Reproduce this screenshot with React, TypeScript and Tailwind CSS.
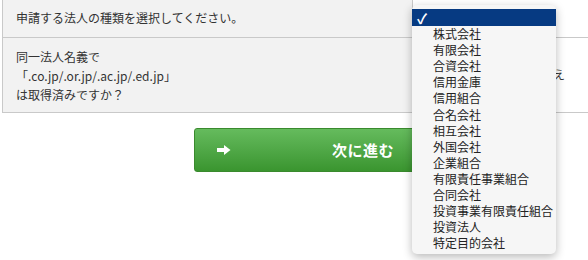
const corpTypes = [
  "株式会社",
  "有限会社",
  "合資会社",
  "信用金庫",
  "信用組合",
  "合名会社",
  "相互会社",
  "外国会社",
  "企業組合",
  "有限責任事業組合",
  "合同会社",
  "投資事業有限責任組合",
  "投資法人",
  "特定目的会社",
];

function ArrowIcon() {
  return (
    <svg width="14" height="10" viewBox="0 0 14 10" className="block">
      <rect x="0" y="3" width="8" height="4" fill="#fff" />
      <path d="M7 0 L13.5 5 L7 10 Z" fill="#fff" />
    </svg>
  );
}

export default function App() {
  return (
    <div
      className="relative h-[260px] w-[588px] overflow-hidden bg-white text-[12px] text-[#333]"
      style={{ fontFamily: '"Noto Sans CJK JP", "Noto Sans", sans-serif' }}
    >
      <div className="ml-[2px] border-b border-[#c9c9c9]">
        <div className="flex h-[38px] border-b border-[#c9c9c9]">
          <div className="flex w-[411px] items-center border-x border-[#c9c9c9] bg-[#f2f2f2] px-[13px] pb-[1px]">
            申請する法人の種類を選択してください。
          </div>
          <div className="flex-1" />
        </div>
        <div className="flex h-[74px]">
          <div className="flex w-[411px] flex-col justify-center border-x border-[#c9c9c9] bg-[#f2f2f2] px-[13px] leading-[19px]">
            <span>同一法人名義で</span>
            <span>「.co.jp/.or.jp/.ac.jp/.ed.jp」</span>
            <span>は取得済みですか？</span>
          </div>
          <div className="flex flex-1 items-center justify-end pr-[23px] pb-[1px]">
            <label className="flex items-center gap-1">
              <input type="radio" name="owned" className="h-3 w-3" />
              いいえ
            </label>
          </div>
        </div>
      </div>

      <div className="pl-[194px] pt-[15px]">
        <button className="flex h-[44px] w-[300px] items-center rounded-[3px] border border-[#3a8a2e] bg-gradient-to-b from-[#65bb5d] to-[#3a952f] pl-[22px] text-white">
          <ArrowIcon />
          <span className="ml-[101px] text-[15px] font-bold tracking-[0.5px]">次に進む</span>
        </button>
      </div>

      <div className="absolute left-[412px] top-[5px] w-[144px] rounded-[5px] bg-[#f6f6f6] pb-[3px] pt-[4px] shadow-[0_3px_10px_rgba(0,0,0,0.28)]">
        <div className="flex h-[17px] items-center bg-[#063a82] pl-[5px] text-[14px] font-bold leading-none text-white">
          ✓
        </div>
        {corpTypes.map((name) => (
          <div key={name} className="flex h-[16.1px] items-center pl-[21px] text-[12px] leading-none text-[#222]">
            {name}
          </div>
        ))}
      </div>
    </div>
  );
}
